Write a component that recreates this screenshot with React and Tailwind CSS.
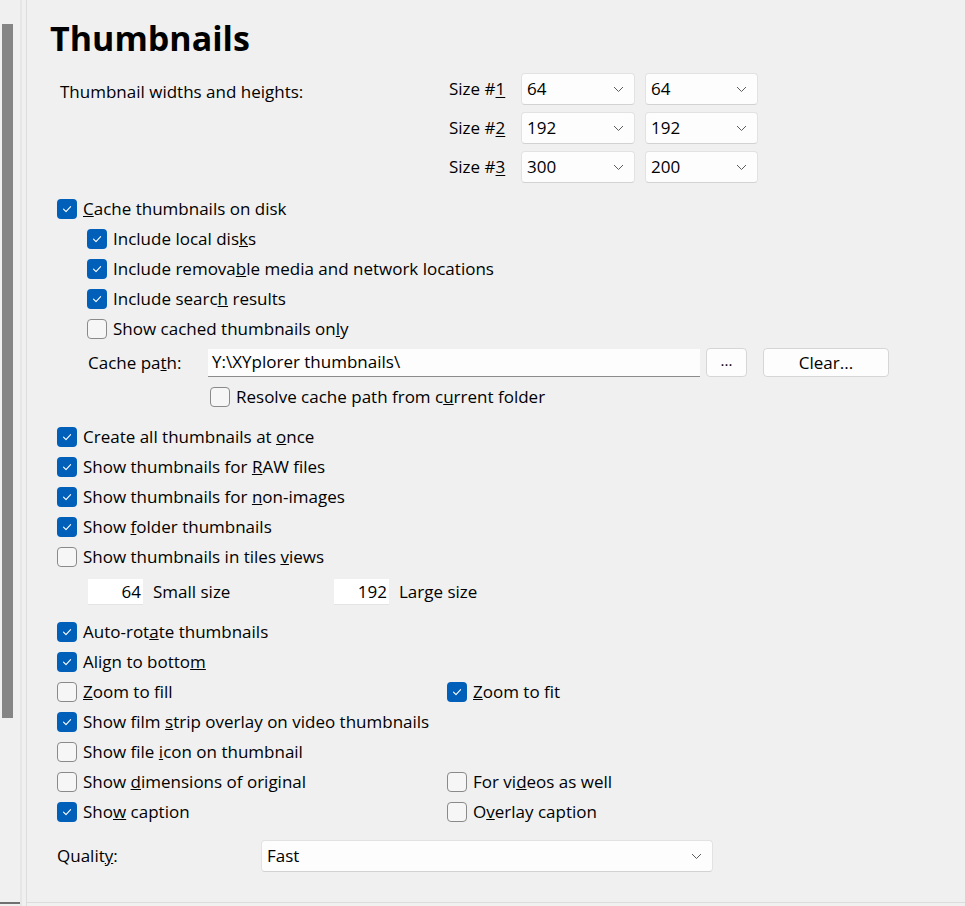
import React from 'react';

const font = { fontFamily: '"Segoe UI", "Open Sans", "Noto Sans", sans-serif' };

function Check({ on }) {
  if (on) {
    return (
      <span className="flex h-[20px] w-[20px] shrink-0 items-center justify-center rounded-[4px] bg-[#005fb8]">
        <svg width="12" height="12" viewBox="0 0 12 12" fill="none">
          <path d="M2.5 6.2 L5 8.6 L9.6 3.6" stroke="#fff" strokeWidth="1.1" strokeLinecap="round" strokeLinejoin="round" />
        </svg>
      </span>
    );
  }
  return <span className="h-[20px] w-[20px] shrink-0 rounded-[4px] border border-[#8a8a8a] bg-[#f6f6f6]" />;
}

function Row({ on, children, className = '' }) {
  return (
    <div className={`flex h-[30px] items-center gap-[6px] ${className}`}>
      <Check on={on} />
      <span>{children}</span>
    </div>
  );
}

function Chevron() {
  return (
    <svg width="11" height="7" viewBox="0 0 11 7" fill="none">
      <path d="M1 1 L5.5 5.5 L10 1" stroke="#5c5c5c" strokeWidth="1" />
    </svg>
  );
}

function Select({ value, className = '' }) {
  return (
    <div className={`flex h-[32px] items-center justify-between rounded-[4px] border border-[#e2e2e2] border-b-[#d2d2d2] bg-[#fdfdfd] pl-[5px] pr-[10px] ${className}`}>
      <span>{value}</span>
      <Chevron />
    </div>
  );
}

function NumBox({ value }) {
  return (
    <div className="flex h-[26px] w-[55px] items-center justify-end border-b border-[#e4e4e4] bg-white pr-[2px]">
      {value}
    </div>
  );
}

export default function App() {
  return (
    <div className="flex h-[906px] w-[965px] overflow-hidden bg-[#f0f0f0] text-[17px] text-black" style={font}>
      {/* scrollbar strip */}
      <div className="relative w-[27px] shrink-0 border-r border-[#dcdcdc]">
        <div className="absolute left-[2px] top-[24px] h-[694px] w-[11px] bg-[#858585]" />
        <div className="absolute left-[20px] top-0 h-full w-[2px] bg-[#e6e6e6]" />
        <div className="absolute bottom-[2px] left-0 h-[2px] w-[20px] bg-[#707070]" />
      </div>

      {/* page */}
      <div className="flex h-[903px] flex-1 flex-col border-b border-[#dcdcdc] pl-[30px]">
        <h1 className="ml-[-7px] mt-[16px] h-[44px] text-[34px] font-bold leading-[44px]">Thumbnails</h1>

        {/* sizes */}
        <div className="mt-[13px] flex">
          <div className="w-[389px] pl-[3px] pt-[6px]">Thumbnail widths and heights:</div>
          <div className="flex flex-col gap-[7px]">
            {[
              ['1', '64', '64'],
              ['2', '192', '192'],
              ['3', '300', '200'],
            ].map(([n, a, b]) => (
              <div key={n} className="flex items-center">
                <span className="w-[75px] pl-[3px]">
                  Size #<u className="underline-offset-2">{n}</u>
                </span>
                <Select value={a} className="w-[114px]" />
                <Select value={b} className="ml-[10px] w-[113px]" />
              </div>
            ))}
          </div>
        </div>

        {/* cache */}
        <div className="mt-[11px] flex flex-col">
          <Row on>
            <u>C</u>ache thumbnails on disk
          </Row>
          <div className="flex flex-col pl-[30px]">
            <Row on>
              Include local dis<u>k</u>s
            </Row>
            <Row on>
              Include remova<u>b</u>le media and network locations
            </Row>
            <Row on>
              Include searc<u>h</u> results
            </Row>
            <Row>
              Show cached thumbnails on<u>l</u>y
            </Row>
            <div className="mt-[4px] flex h-[29px] items-center">
              <span className="w-[121px] pl-[1px]">
                Cache pa<u>t</u>h:
              </span>
              <div className="flex h-[28px] w-[492px] items-center border-b border-[#8c8c8c] bg-[#fdfdfd] pl-[4px]">
                Y:\XYplorer thumbnails\
              </div>
              <div className="ml-[6px] flex h-[29px] w-[41px] items-center justify-center rounded-[4px] border border-[#d6d6d6] bg-[#fdfdfd] pb-[4px] text-[15px]">
                ...
              </div>
              <div className="ml-[16px] flex h-[29px] w-[126px] items-center justify-center rounded-[4px] border border-[#d6d6d6] bg-[#fdfdfd]">
                Clear...
              </div>
            </div>
            <Row className="mt-[5px] pl-[123px]">
              Resolve cache path from c<u>u</u>rrent folder
            </Row>
          </div>
        </div>

        {/* display */}
        <div className="mt-[10px] flex flex-col">
          <Row on>
            Create all thumbnails at <u>o</u>nce
          </Row>
          <Row on>
            Show thumbnails for <u>R</u>AW files
          </Row>
          <Row on>
            Show thumbnails for <u>n</u>on-images
          </Row>
          <Row on>
            Show <u>f</u>older thumbnails
          </Row>
          <Row>
            Show thumbnails in tiles <u>v</u>iews
          </Row>
          <div className="mt-[6px] flex h-[28px] items-center pl-[31px]">
            <NumBox value="64" />
            <span className="ml-[10px] w-[181px]">Small size</span>
            <NumBox value="192" />
            <span className="ml-[10px]">Large size</span>
          </div>
        </div>

        <div className="mt-[11px] flex flex-col">
          <Row on>
            Auto-rot<u>a</u>te thumbnails
          </Row>
          <Row on>
            Align to botto<u>m</u>
          </Row>
          <div className="flex">
            <Row className="w-[390px]">
              <u>Z</u>oom to fill
            </Row>
            <Row on>
              <u>Z</u>oom to fit
            </Row>
          </div>
          <Row on>
            Show film <u>s</u>trip overlay on video thumbnails
          </Row>
          <Row>
            Show file <u>i</u>con on thumbnail
          </Row>
          <div className="flex">
            <Row className="w-[390px]">
              Show <u>d</u>imensions of original
            </Row>
            <Row>
              For vi<u>d</u>eos as well
            </Row>
          </div>
          <div className="flex">
            <Row on className="w-[390px]">
              Sho<u>w</u> caption
            </Row>
            <Row>
              O<u>v</u>erlay caption
            </Row>
          </div>
        </div>

        <div className="mt-[13px] flex items-center">
          <span className="w-[204px]">
            Qualit<u>y</u>:
          </span>
          <Select value="Fast" className="w-[452px]" />
        </div>
      </div>
    </div>
  );
}
